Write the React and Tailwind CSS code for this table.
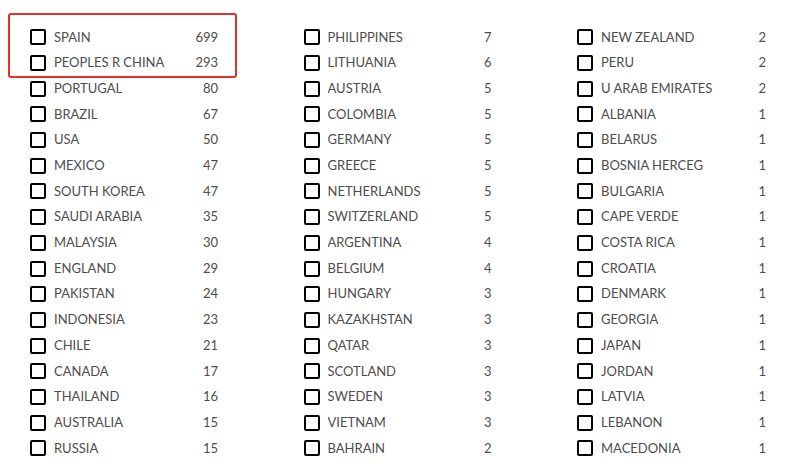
const COLS = [
  [
    ["SPAIN", 699], ["PEOPLES R CHINA", 293], ["PORTUGAL", 80], ["BRAZIL", 67], ["USA", 50],
    ["MEXICO", 47], ["SOUTH KOREA", 47], ["SAUDI ARABIA", 35], ["MALAYSIA", 30], ["ENGLAND", 29],
    ["PAKISTAN", 24], ["INDONESIA", 23], ["CHILE", 21], ["CANADA", 17], ["THAILAND", 16],
    ["AUSTRALIA", 15], ["RUSSIA", 15],
  ],
  [
    ["PHILIPPINES", 7], ["LITHUANIA", 6], ["AUSTRIA", 5], ["COLOMBIA", 5], ["GERMANY", 5],
    ["GREECE", 5], ["NETHERLANDS", 5], ["SWITZERLAND", 5], ["ARGENTINA", 4], ["BELGIUM", 4],
    ["HUNGARY", 3], ["KAZAKHSTAN", 3], ["QATAR", 3], ["SCOTLAND", 3], ["SWEDEN", 3],
    ["VIETNAM", 3], ["BAHRAIN", 2],
  ],
  [
    ["NEW ZEALAND", 2], ["PERU", 2], ["U ARAB EMIRATES", 2], ["ALBANIA", 1], ["BELARUS", 1],
    ["BOSNIA HERCEG", 1], ["BULGARIA", 1], ["CAPE VERDE", 1], ["COSTA RICA", 1], ["CROATIA", 1],
    ["DENMARK", 1], ["GEORGIA", 1], ["JAPAN", 1], ["JORDAN", 1], ["LATVIA", 1],
    ["LEBANON", 1], ["MACEDONIA", 1],
  ],
];

function Row({ name, count }) {
  return (
    <label className="flex items-center h-[25.7px] cursor-pointer">
      <span className="w-4 h-4 border-2 border-black rounded-[2px] shrink-0" />
      <span className="ml-2 flex-1 truncate">{name}</span>
      <span>{count}</span>
    </label>
  );
}

export default function App() {
  return (
    <div className="relative w-[796px] h-[468px] bg-white overflow-hidden font-['Lato','Liberation_Sans',sans-serif] text-[13px] text-[#4d4d4d]">
      <div className="absolute left-[8px] top-[13px] w-[229px] h-[65px] border-2 border-[#e8302a] rounded-[3px] pointer-events-none" />
      <div className="grid grid-cols-[188px_188px_189px] gap-x-[85.5px] pl-[30px] pt-[24.5px]">
        {COLS.map((col, i) => (
          <div key={i} className="flex flex-col">
            {col.map(([n, c]) => (
              <Row key={n} name={n} count={c} />
            ))}
          </div>
        ))}
      </div>
    </div>
  );
}
